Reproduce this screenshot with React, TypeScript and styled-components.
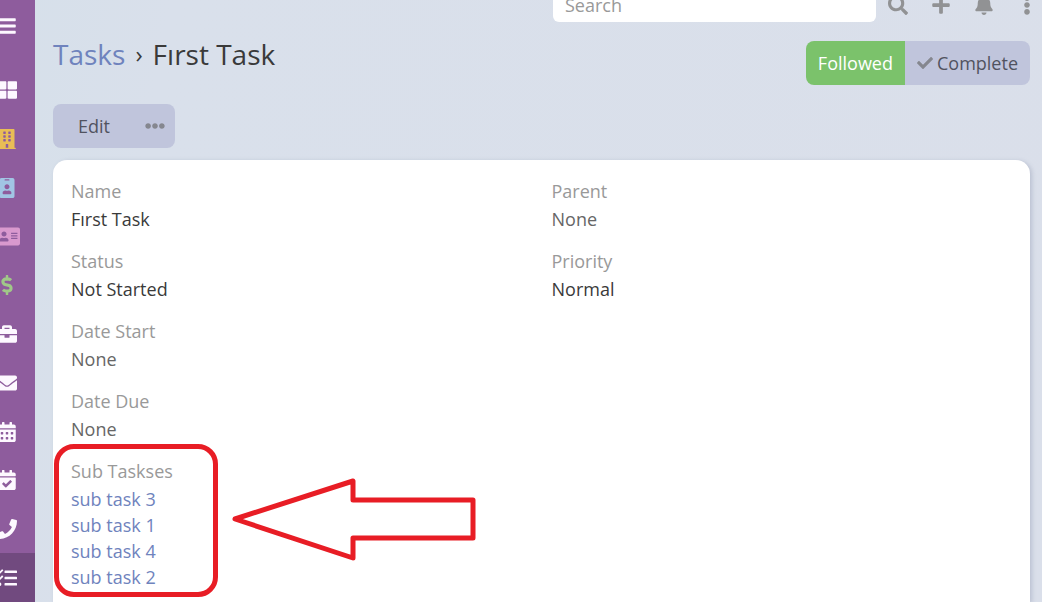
import React from "react";
import styled, { createGlobalStyle } from "styled-components";
import {
  FaAddressCard,
  FaBars,
  FaBell,
  FaBriefcase,
  FaBuilding,
  FaCalendarAlt,
  FaCalendarCheck,
  FaCheck,
  FaDollarSign,
  FaEllipsisH,
  FaEllipsisV,
  FaEnvelope,
  FaIdBadge,
  FaPhone,
  FaPlus,
  FaSearch,
  FaTasks,
  FaThLarge,
} from "react-icons/fa";

const GlobalStyle = createGlobalStyle`
  * { box-sizing: border-box; }
  body {
    margin: 0;
    font-family: "Open Sans", "Noto Sans", sans-serif;
    font-size: 18px;
    line-height: 26px;
    color: #3a3a3a;
    background: #dadfea;
  }
  button, input { font: inherit; }
  a { color: #6f83bd; text-decoration: none; }
`;

const Page = styled.div`
  display: flex;
  min-height: 100vh;
  overflow: hidden;
  background: linear-gradient(100deg, #d6e0ea 0%, #d9e0eb 15%, #dadfea 100%);
`;

const Sidebar = styled.aside`
  flex: 0 0 35px;
  display: flex;
  flex-direction: column;
  background: #8e5c9d;
`;

const MenuButton = styled.button`
  flex: 0 0 66px;
  display: flex;
  padding: 16px 0 0;
  border: 0;
  background: none;
  color: #fdf8ff;
  font-size: 20px;
`;

const Nav = styled.nav`
  flex: 1;
  display: flex;
  flex-direction: column;
`;

const NavLink = styled.a<{ $color?: string; $active?: boolean }>`
  flex: 1;
  display: flex;
  align-items: center;
  color: ${(p) => p.$color ?? "#fdf8ff"};
  background: ${(p) => (p.$active ? "#714a7f" : "transparent")};
  font-size: 20px;
`;

const NavIcon = styled.span<{ $wide?: boolean }>`
  display: flex;
  justify-content: ${(p) => (p.$wide ? "flex-start" : "center")};
  width: 20px;
  margin-left: -3px;
  font-size: ${(p) => (p.$wide ? 23 : 20)}px;
  svg { flex: none; }
`;

const Main = styled.main`
  flex: 1;
  min-width: 0;
  display: flex;
  flex-direction: column;
`;

const TopBar = styled.div`
  display: flex;
  justify-content: flex-end;
  align-items: center;
  gap: 12px;
  height: 34px;
  margin-top: -12px;
  padding: 0 5px 0 18px;
`;

const SearchInput = styled.input`
  flex: 0 1 323px;
  min-width: 0;
  height: 34px;
  padding: 0 12px;
  border: 0;
  border-radius: 6px;
  background: #fff;
  color: #333;
  &::placeholder { color: #999; opacity: 1; }
`;

const TopActions = styled.div`
  display: flex;
  gap: 23px;
`;

const IconButton = styled.button`
  display: flex;
  justify-content: center;
  width: 20px;
  padding: 0;
  border: 0;
  background: none;
  color: #919294;
  font-size: 20px;
`;

const Content = styled.div`
  flex: 1;
  display: flex;
  flex-direction: column;
  gap: 12px;
  padding: 19px 12px 0 18px;
`;

const PageHeader = styled.header`
  display: flex;
  justify-content: space-between;
  align-items: flex-start;
  margin-bottom: 7px;
`;

const Title = styled.h1`
  display: flex;
  gap: 10px;
  margin: 0;
  font-size: 28px;
  line-height: 26px;
  font-weight: 400;
`;

const Separator = styled.span`
  font-size: 24px;
`;

const ButtonGroup = styled.div`
  display: flex;
  align-self: flex-start;
  border-radius: 8px;
  overflow: hidden;
`;

const Button = styled.button<{ $tone?: "success"; $pad: number }>`
  display: flex;
  align-items: center;
  gap: 4px;
  height: 44px;
  padding: 0 ${(p) => p.$pad}px;
  border: 0;
  background: ${(p) => (p.$tone ? "#7bc26b" : "#c0c5dc")};
  color: ${(p) => (p.$tone ? "#fff" : "#515360")};
  svg { color: #85878f; }
`;

const Card = styled.section`
  flex: 1;
  display: grid;
  grid-template-columns: 1fr 1fr;
  align-items: start;
  gap: 20px;
  padding: 18px 18px 8px;
  border-radius: 14px 14px 0 0;
  background: #fff;
  box-shadow: 2px 1px 4px rgba(90, 105, 135, 0.25);
`;

const FieldList = styled.dl`
  display: flex;
  flex-direction: column;
  gap: 16px;
  margin: 0;
`;

const FieldBox = styled.div`
  position: relative;
`;

const Label = styled.dt`
  margin-bottom: 2px;
  color: #999;
`;

const Value = styled.dd<{ $muted?: boolean }>`
  margin: 0;
  color: ${(p) => (p.$muted ? "#666" : "#3a3a3a")};
  a { display: block; width: fit-content; }
`;

const Highlight = styled.div`
  position: absolute;
  left: -17px;
  top: -14px;
  width: 164px;
  height: 153px;
  border: 5px solid #e81d25;
  border-radius: 20px;
  pointer-events: none;
`;

const Arrow = styled.svg`
  position: absolute;
  left: 159px;
  top: 18px;
  pointer-events: none;
`;

const navItems = [
  { name: "Home", Icon: FaThLarge },
  { name: "Accounts", Icon: FaBuilding, color: "#e9bd55" },
  { name: "Contacts", Icon: FaIdBadge, color: "#a1c5e4" },
  { name: "Leads", Icon: FaAddressCard, color: "#d999ce", wide: true },
  { name: "Opportunities", Icon: FaDollarSign, color: "#a0c888" },
  { name: "Cases", Icon: FaBriefcase },
  { name: "Emails", Icon: FaEnvelope },
  { name: "Calendar", Icon: FaCalendarAlt },
  { name: "Meetings", Icon: FaCalendarCheck },
  { name: "Calls", Icon: FaPhone },
  { name: "Tasks", Icon: FaTasks, active: true },
];

const subTasks = ["sub task 3", "sub task 1", "sub task 4", "sub task 2"];

function Field({ label, value }: { label: string; value: string }) {
  return (
    <FieldBox>
      <Label>{label}</Label>
      <Value $muted={value === "None"}>{value}</Value>
    </FieldBox>
  );
}

export default function App() {
  return (
    <>
      <GlobalStyle />
      <Page>
        <Sidebar>
          <MenuButton aria-label="Menu">
            <NavIcon>
              <FaBars />
            </NavIcon>
          </MenuButton>
          <Nav>
            {navItems.map(({ name, Icon, color, wide, active }) => (
              <NavLink key={name} href="#" aria-label={name} $color={color} $active={active}>
                <NavIcon $wide={wide}>
                  <Icon />
                </NavIcon>
              </NavLink>
            ))}
          </Nav>
        </Sidebar>
        <Main>
          <TopBar>
            <SearchInput type="text" placeholder="Search" aria-label="Search" />
            <TopActions>
              <IconButton aria-label="Run search"><FaSearch /></IconButton>
              <IconButton aria-label="Create"><FaPlus /></IconButton>
              <IconButton aria-label="Notifications"><FaBell /></IconButton>
              <IconButton aria-label="More"><FaEllipsisV /></IconButton>
            </TopActions>
          </TopBar>
          <Content>
            <PageHeader>
              <Title>
                <a href="#">Tasks</a>
                <Separator>›</Separator>
                <span>Fırst Task</span>
              </Title>
              <ButtonGroup>
                <Button $tone="success" $pad={12}>Followed</Button>
                <Button $pad={12}>
                  <FaCheck size={16} />
                  Complete
                </Button>
              </ButtonGroup>
            </PageHeader>
            <ButtonGroup>
              <Button $pad={25}>Edit</Button>
              <Button $pad={10} aria-label="More actions">
                <FaEllipsisH size={20} />
              </Button>
            </ButtonGroup>
            <Card>
              <FieldList>
                <Field label="Name" value="Fırst Task" />
                <Field label="Status" value="Not Started" />
                <Field label="Date Start" value="None" />
                <Field label="Date Due" value="None" />
                <FieldBox>
                  <Label>Sub Taskses</Label>
                  <Value>
                    {subTasks.map((task) => (
                      <a key={task} href="#">{task}</a>
                    ))}
                  </Value>
                  <Highlight />
                  <Arrow width="248" height="88" viewBox="0 0 248 88" aria-hidden="true">
                    <path
                      d="M5 43 L123 5 V24 H243 V62 H123 V82 Z"
                      fill="none"
                      stroke="#e81d25"
                      strokeWidth="5"
                      strokeLinejoin="round"
                    />
                  </Arrow>
                </FieldBox>
              </FieldList>
              <FieldList>
                <Field label="Parent" value="None" />
                <Field label="Priority" value="Normal" />
              </FieldList>
            </Card>
          </Content>
        </Main>
      </Page>
    </>
  );
}
